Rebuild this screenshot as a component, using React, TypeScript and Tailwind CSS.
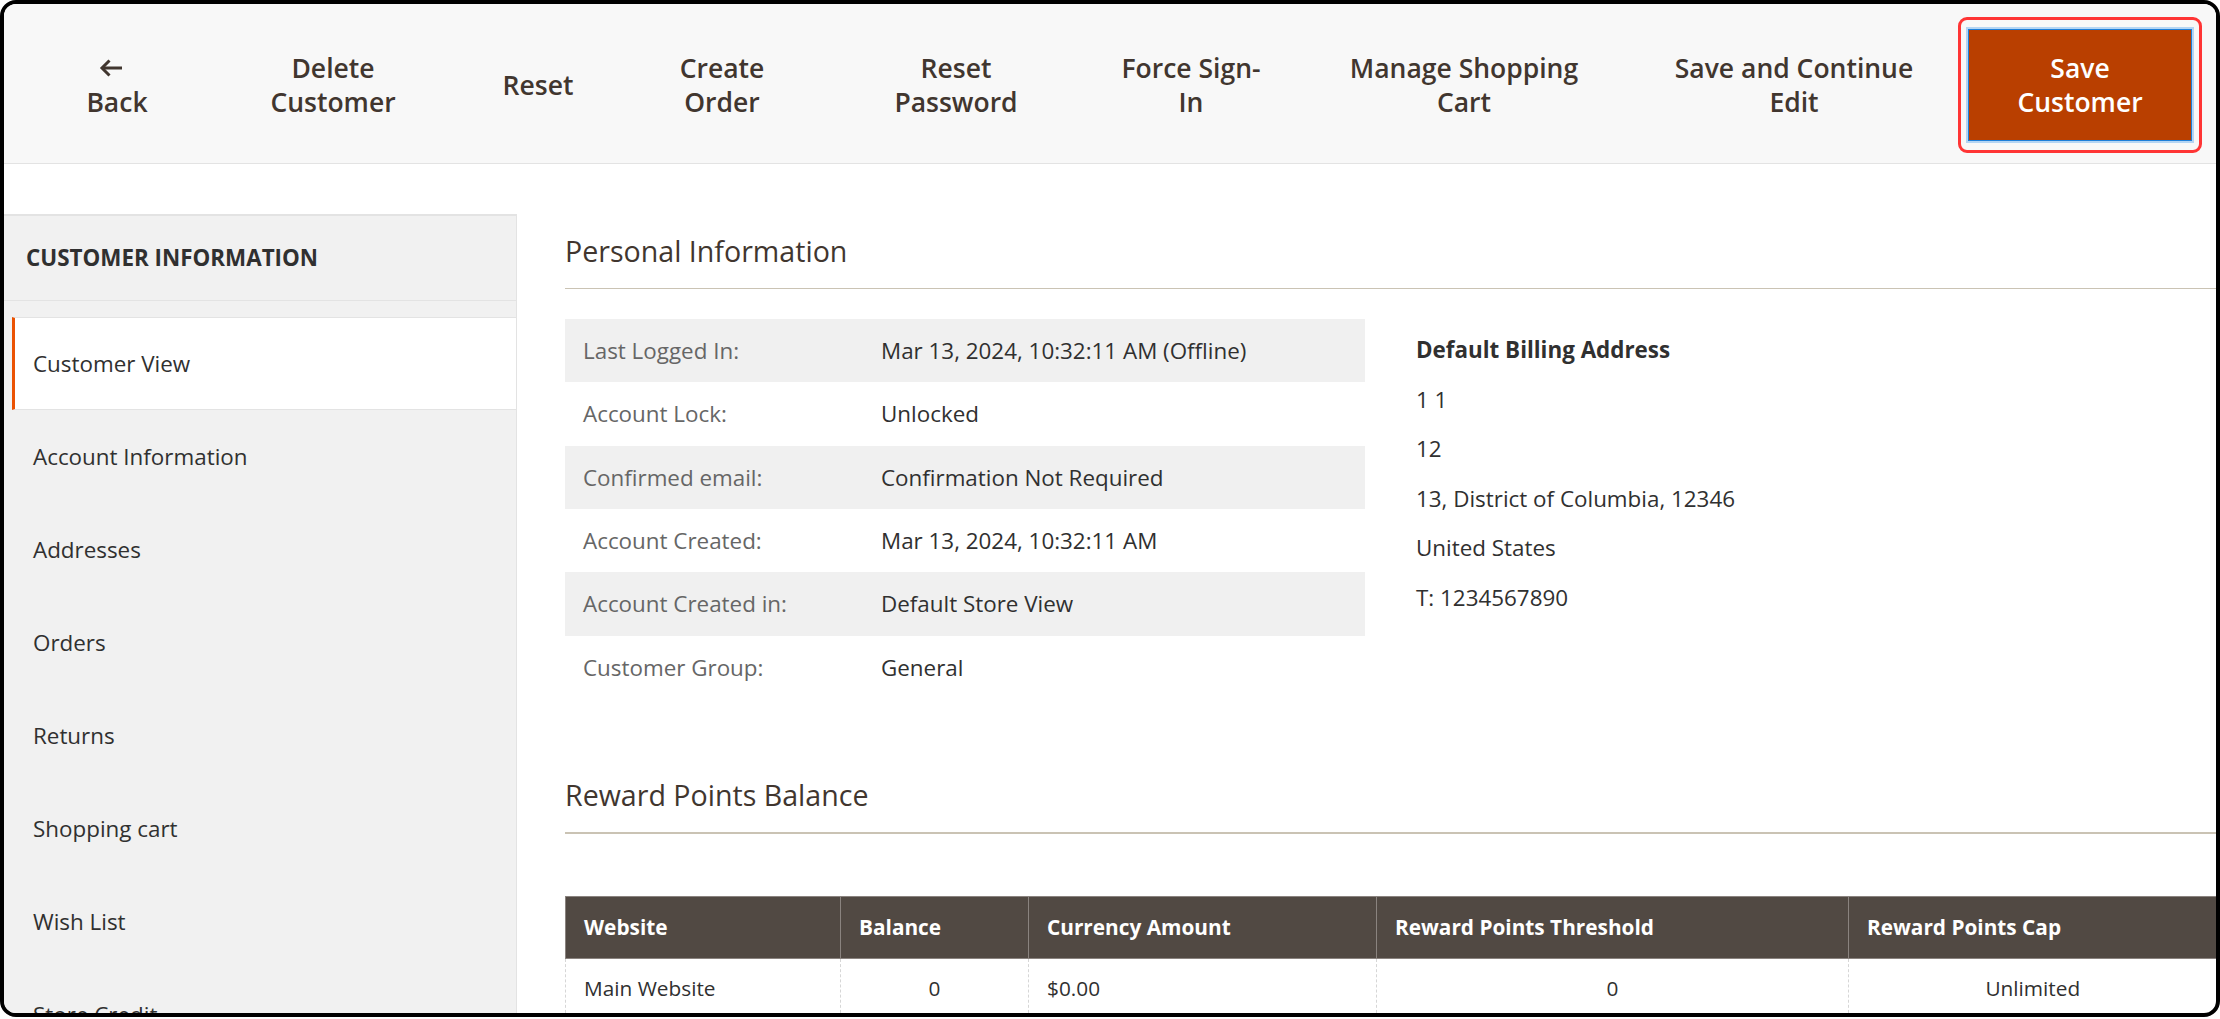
import React from "react";

const toolbar: { w: string; lines: string[] }[] = [
  { w: "w-[248px]", lines: ["Delete", "Customer"] },
  { w: "w-[162px]", lines: ["Reset"] },
  { w: "w-[206px]", lines: ["Create", "Order"] },
  { w: "w-[262px]", lines: ["Reset", "Password"] },
  { w: "w-[208px]", lines: ["Force Sign-", "In"] },
  { w: "w-[338px]", lines: ["Manage Shopping", "Cart"] },
  { w: "w-[322px]", lines: ["Save and Continue", "Edit"] },
];

const navItems = [
  "Account Information",
  "Addresses",
  "Orders",
  "Returns",
  "Shopping cart",
  "Wish List",
  "Store Credit",
];

const personal: [string, string][] = [
  ["Last Logged In:", "Mar 13, 2024, 10:32:11 AM (Offline)"],
  ["Account Lock:", "Unlocked"],
  ["Confirmed email:", "Confirmation Not Required"],
  ["Account Created:", "Mar 13, 2024, 10:32:11 AM"],
  ["Account Created in:", "Default Store View"],
  ["Customer Group:", "General"],
];

const address = [
  "1 1",
  "12",
  "13, District of Columbia, 12346",
  "United States",
  "T: 1234567890",
];

function BackArrow() {
  return (
    <svg width="25" height="20" viewBox="0 0 25 20" fill="none">
      <path d="M24 10H4" stroke="#41362f" strokeWidth="3" />
      <path d="M11.5 2.5L4 10L11.5 17.5" stroke="#41362f" strokeWidth="3" strokeLinejoin="miter" />
    </svg>
  );
}

export default function App() {
  return (
    <div className="w-[2220px] h-[1019px] bg-white font-['Open_Sans',sans-serif]">
      <div className="w-[2220px] h-[1017px] border-4 border-black rounded-[16px] overflow-hidden flex flex-col bg-white">
        {/* Toolbar */}
        <header className="h-[160px] shrink-0 bg-[#f8f8f8] border-b border-[#e3e3e3] flex items-center pl-[21px] pt-[2px] text-[#41362f] text-[26.5px] leading-[34px] font-semibold">
          <div className="w-[184px] shrink-0 flex flex-col items-center">
            <div className="h-[34px] flex items-center mr-[14px]">
              <BackArrow />
            </div>
            <span>Back</span>
          </div>
          {toolbar.map((b) => (
            <div key={b.lines.join(" ")} className={`${b.w} shrink-0 text-center`}>
              {b.lines.map((l) => (
                <div key={l} className="whitespace-nowrap">
                  {l}
                </div>
              ))}
            </div>
          ))}
          <div className="ml-[3px] w-[244px] h-[136px] shrink-0 border-[3px] border-[#ff3535] rounded-[9px] flex items-center justify-center">
            <div className="w-[224px] h-[112px] bg-[#b93f00] border-[1.5px] border-[#1d7fd9] shadow-[0_0_0_2px_#b5d5f3] text-white flex flex-col items-center justify-center">
              <div>Save</div>
              <div>Customer</div>
            </div>
          </div>
        </header>

        {/* Main */}
        <div className="flex flex-1 min-h-0">
          <aside className="w-[513px] shrink-0 mt-[50px] bg-[#f1f1f1] border-r border-[#e3e3e3] overflow-hidden text-[22.4px] text-[#303030]">
            <div className="h-[87px] border-t-2 border-b border-[#e3e3e3] flex items-center pl-[22px] font-bold uppercase">
              Customer Information
            </div>
            <div className="mt-[16px] ml-[8px] h-[93px] bg-white border-l-[3px] border-l-[#eb5202] border-y border-y-[#e3e3e3] flex items-center pl-[18px]">
              Customer View
            </div>
            {navItems.map((n) => (
              <div key={n} className="h-[93px] flex items-center pl-[29px]">
                {n}
              </div>
            ))}
          </aside>

          <main className="flex-1 min-w-0 pl-[48px] pt-[68px]">
            <h2 className="text-[28.6px] leading-[38px] text-[#41362f] pb-[18px] border-b border-[#cac3b4]">
              Personal Information
            </h2>
            <div className="flex mt-[30px] text-[22.4px]">
              <div className="w-[800px] shrink-0">
                {personal.map(([k, v], i) => (
                  <div
                    key={k}
                    className={`h-[63.33px] flex items-center ${i % 2 === 0 ? "bg-[#f0f0f0]" : "bg-white"}`}
                  >
                    <div className="w-[298px] pl-[18px] text-[#666666]">{k}</div>
                    <div className="pl-[18px] text-[#303030]">{v}</div>
                  </div>
                ))}
              </div>
              <div className="ml-[51px] pt-[6px] leading-[49.6px] text-[#303030]">
                <div className="font-bold">Default Billing Address</div>
                {address.map((a) => (
                  <div key={a}>{a}</div>
                ))}
              </div>
            </div>

            <h2 className="mt-[77px] text-[28.6px] leading-[38px] text-[#41362f] pb-[18px] border-b-2 border-[#cac3b4]">
              Reward Points Balance
            </h2>
            <table className="mt-[62px] w-full table-fixed border-collapse text-[20.8px]">
              <colgroup>
                <col className="w-[275px]" />
                <col className="w-[188px]" />
                <col className="w-[348px]" />
                <col className="w-[472px]" />
                <col className="w-[368px]" />
              </colgroup>
              <thead>
                <tr className="h-[62px] bg-[#514943] text-white">
                  <th className="text-left pl-[18px] font-bold border border-[#8a837f]">Website</th>
                  <th className="text-left pl-[18px] font-bold border border-[#8a837f]">Balance</th>
                  <th className="text-left pl-[18px] font-bold border border-[#8a837f]">Currency Amount</th>
                  <th className="text-left pl-[18px] font-bold border border-[#8a837f]">Reward Points Threshold</th>
                  <th className="text-left pl-[18px] font-bold border border-[#8a837f]">Reward Points Cap</th>
                </tr>
              </thead>
              <tbody className="text-[#303030]">
                <tr className="h-[60px]">
                  <td className="pl-[18px] border-l border-dashed border-[#d6d6d6]">Main Website</td>
                  <td className="text-center border-l border-dashed border-[#d6d6d6]">0</td>
                  <td className="pl-[18px] border-l border-dashed border-[#d6d6d6]">$0.00</td>
                  <td className="text-center border-l border-dashed border-[#d6d6d6]">0</td>
                  <td className="text-center border-l border-dashed border-[#d6d6d6]">Unlimited</td>
                </tr>
              </tbody>
            </table>
          </main>
        </div>
      </div>
    </div>
  );
}
